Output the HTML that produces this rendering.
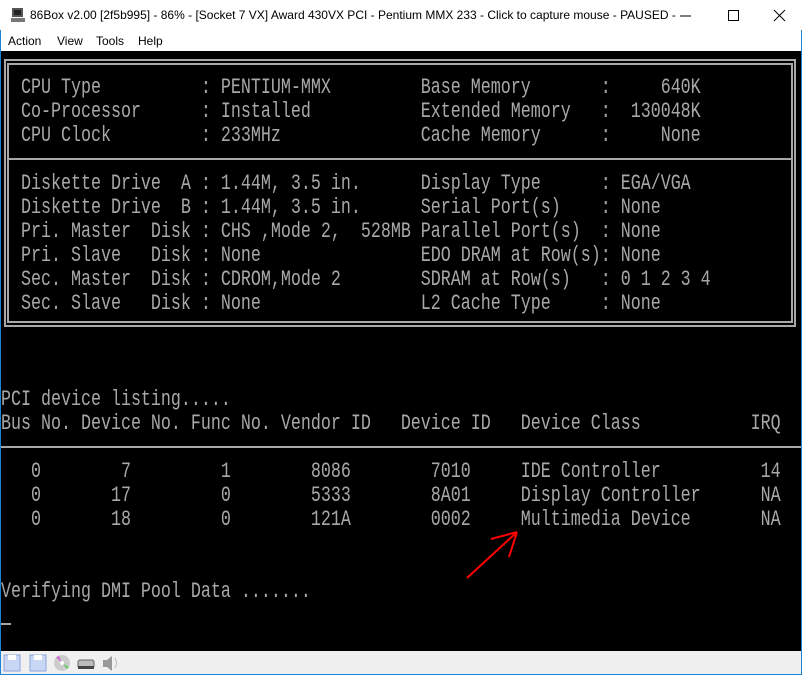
<!DOCTYPE html>
<html><head><meta charset="utf-8"><style>
*{margin:0;padding:0;box-sizing:border-box}
body{width:802px;height:675px;overflow:hidden;background:#fff;font-family:"Liberation Sans",sans-serif;position:relative}
.title{position:absolute;left:0;top:0;width:802px;height:30px;background:#fff;font-size:12px;color:#000}
.title .t{position:absolute;left:30px;top:8px;white-space:nowrap}
.menu{position:absolute;left:0;top:30px;width:802px;height:21px;font-size:12px}
.menu span{position:absolute;top:4px}
.screen{position:absolute;left:1px;top:51px;width:800px;height:600px;background:#000;overflow:hidden}
.r{position:absolute;left:0;height:24px;line-height:24px;margin-top:2px;font-family:"Liberation Mono",monospace;font-size:16.67px;color:#a8a8a8;white-space:pre;transform:scaleY(1.35);transform-origin:center}
.h{position:absolute;background:#a8a8a8;height:2px}
.v{position:absolute;background:#a8a8a8;width:2px}
.status{position:absolute;left:1px;top:651px;width:800px;height:23px;background:#f0f0f0}
.bl{position:absolute;background:#1883d7}
</style></head><body>
<div class="title">
<svg style="position:absolute;left:10px;top:7px" width="16" height="16"><rect x="2" y="1" width="11" height="9" fill="#555"/><rect x="4" y="3" width="7" height="5" fill="#222"/><rect x="1" y="11" width="14" height="4" fill="#777"/></svg>
<div class="t">86Box v2.00 [2f5b995] - 86% - [Socket 7 VX] Award 430VX PCI - Pentium MMX 233 - Click to capture mouse - PAUSED -</div>
<svg style="position:absolute;left:680px;top:9px" width="110" height="14"><line x1="0" y1="7" x2="11" y2="7" stroke="#000"/><rect x="48.5" y="1.5" width="10" height="10" fill="none" stroke="#000"/><line x1="94" y1="1" x2="105" y2="12" stroke="#000"/><line x1="105" y1="1" x2="94" y2="12" stroke="#000"/></svg>
</div>
<div class="menu"><span style="left:8px">Action</span><span style="left:57px">View</span><span style="left:96px">Tools</span><span style="left:138px">Help</span></div>
<div class="screen">
<div class="h" style="left:3px;top:8px;width:792px"></div>
<div class="h" style="left:6px;top:12px;width:786px"></div>
<div class="h" style="left:3px;top:274px;width:792px"></div>
<div class="h" style="left:6px;top:270px;width:786px"></div>
<div class="v" style="left:3px;top:8px;height:268px"></div>
<div class="v" style="left:6px;top:12px;height:260px"></div>
<div class="v" style="left:793px;top:8px;height:268px"></div>
<div class="v" style="left:790px;top:12px;height:260px"></div>
<div class="h" style="left:6px;top:107px;width:786px"></div>
<div class="h" style="left:0;top:395px;width:800px"></div>
<div class="r" style="top:24px">  CPU Type          : PENTIUM-MMX         Base Memory       :     640K</div>
<div class="r" style="top:48px">  Co-Processor      : Installed           Extended Memory   :  130048K</div>
<div class="r" style="top:72px">  CPU Clock         : 233MHz              Cache Memory      :     None</div>
<div class="r" style="top:120px">  Diskette Drive  A : 1.44M, 3.5 in.      Display Type      : EGA/VGA</div>
<div class="r" style="top:144px">  Diskette Drive  B : 1.44M, 3.5 in.      Serial Port(s)    : None</div>
<div class="r" style="top:168px">  Pri. Master  Disk : CHS ,Mode 2,  528MB Parallel Port(s)  : None</div>
<div class="r" style="top:192px">  Pri. Slave   Disk : None                EDO DRAM at Row(s): None</div>
<div class="r" style="top:216px">  Sec. Master  Disk : CDROM,Mode 2        SDRAM at Row(s)   : 0 1 2 3 4</div>
<div class="r" style="top:240px">  Sec. Slave   Disk : None                L2 Cache Type     : None</div>
<div class="r" style="top:336px">PCI device listing.....</div>
<div class="r" style="top:360px">Bus No. Device No. Func No. Vendor ID   Device ID   Device Class           IRQ</div>
<div class="r" style="top:408px">   0        7         1        8086        7010     IDE Controller          14</div>
<div class="r" style="top:432px">   0       17         0        5333        8A01     Display Controller      NA</div>
<div class="r" style="top:456px">   0       18         0        121A        0002     Multimedia Device       NA</div>
<div class="r" style="top:528px">Verifying DMI Pool Data .......</div>
<div class="h" style="left:0;top:572px;width:10px"></div>
<svg style="position:absolute;left:0;top:0" width="800" height="600"><g stroke="#f00" stroke-width="2" fill="none"><line x1="466" y1="527" x2="516" y2="481"/><line x1="516" y1="481" x2="490" y2="488"/><line x1="516" y1="481" x2="508" y2="506"/></g></svg>
</div>
<div class="status">
<svg width="130" height="23">
<rect x="3" y="4" width="16" height="16" fill="#c8d8f4" stroke="#8aa6dc"/><rect x="7" y="4" width="8" height="5" fill="#fff"/>
<rect x="29" y="4" width="16" height="16" fill="#c8d8f4" stroke="#8aa6dc"/><rect x="33" y="4" width="8" height="5" fill="#fff"/>
<circle cx="61" cy="12" r="8" fill="#ccc"/><path d="M61 12 L55 6 L58 5Z" fill="#c6c"/><path d="M61 12 L68 16 L66 18Z" fill="#6c6"/><circle cx="61" cy="12" r="2" fill="#fff"/>
<rect x="77" y="9" width="16" height="8" rx="2" fill="#bbb" stroke="#666"/><rect x="77" y="15" width="16" height="3" fill="#444"/>
<path d="M102 9h4l5-4v15l-5-4h-4z" fill="#999"/><path d="M114 7q3 5 0 10" stroke="#bbb" fill="none"/>
</svg>
</div>
<div class="bl" style="left:0;top:30px;width:1px;height:645px"></div>
<div class="bl" style="left:801px;top:30px;width:1px;height:645px"></div>
<div class="bl" style="left:0;top:674px;width:802px;height:1px"></div>
</body></html>
